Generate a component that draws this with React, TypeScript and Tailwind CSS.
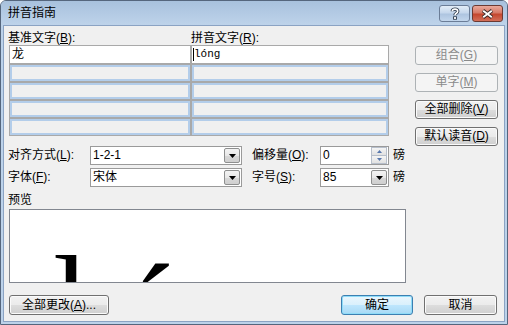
import React from "react";

const ui = "font-['Liberation_Sans','Noto_Sans_CJK_SC',sans-serif] text-[12px] leading-[13px] text-black";

function Btn({
  children,
  className = "",
  disabled,
  isDefault,
}: {
  children: React.ReactNode;
  className?: string;
  disabled?: boolean;
  isDefault?: boolean;
}) {
  const base = "flex items-center justify-center rounded-[3px] border whitespace-nowrap";
  const look = disabled
    ? "border-[#adb2b5] bg-[#f4f4f4] text-[#8a8a8a]"
    : isDefault
    ? "border-[#3c7fb1] bg-[linear-gradient(#eaf6fd_0%,#d9f0fc_50%,#bee6fd_51%,#a7d9f5_100%)] shadow-[inset_0_0_0_1px_#8fdcf8]"
    : "border-[#707070] bg-[linear-gradient(#f2f2f2_0%,#ebebeb_50%,#dddddd_51%,#cfcfcf_100%)] shadow-[inset_0_0_0_1px_#fbfbfb]";
  return <div className={`${base} ${look} ${className}`}>{children}</div>;
}

function DropArrow() {
  return (
    <div className="mr-[1px] flex h-[15px] w-[16px] items-center justify-center rounded-[2px] border border-[#8e8f8f] bg-[linear-gradient(#f3f3f3_0%,#e8e8e8_50%,#d8d8d8_51%,#cfcfcf_100%)]">
      <svg width="7" height="4" viewBox="0 0 7 4">
        <path d="M0 0h7L3.5 4z" fill="#000" />
      </svg>
    </div>
  );
}

function Combo({ value, className = "" }: { value: string; className?: string }) {
  return (
    <div className={`flex h-[19px] items-center border border-[#9a9a9a] bg-white ${className}`}>
      <span className="flex-1 pl-[2px]">{value}</span>
      <DropArrow />
    </div>
  );
}

function Spin({ value }: { value: string }) {
  return (
    <div className="flex h-[19px] w-[69px] items-center border border-[#9a9a9a] bg-white">
      <span className="flex-1 pl-[2px]">{value}</span>
      <div className="mr-[1px] flex h-[17px] w-[16px] flex-col">
        <div className="flex flex-1 items-center justify-center border border-[#b7bfcb] bg-[linear-gradient(#f5f5f5,#e1e1e1)]">
          <svg width="5" height="3" viewBox="0 0 5 3">
            <path d="M0 3h5L2.5 0z" fill="#5878ad" />
          </svg>
        </div>
        <div className="flex flex-1 items-center justify-center border border-t-0 border-[#b7bfcb] bg-[linear-gradient(#f5f5f5,#e1e1e1)]">
          <svg width="5" height="3" viewBox="0 0 5 3">
            <path d="M0 0h5L2.5 3z" fill="#5878ad" />
          </svg>
        </div>
      </div>
    </div>
  );
}

function EmptyRow() {
  return (
    <div className="flex h-[16px] gap-[2px]">
      <div className="w-[180px] border-2 border-[#b3cdea] bg-[#f0f0f0]" />
      <div className="flex-1 border-2 border-[#b3cdea] bg-[#f0f0f0]" />
    </div>
  );
}

export default function App() {
  return (
    <div className={`${ui} flex h-[325px] w-[508px] flex-col overflow-hidden rounded-t-[6px] border border-[#55667d] bg-[#bcd2ea]`}>
      {/* Title bar */}
      <div className="flex h-[24px] items-start bg-[linear-gradient(#a8c1dd,#bed3ea)] pr-[4px]">
        <span className="self-center pl-[7px]">拼音指南</span>
        <div className="ml-auto flex gap-[2px] pt-[4px]">
          <div className="flex h-[17px] w-[31px] items-center justify-center rounded-[3px] border border-[#6b7d97] bg-[linear-gradient(#e3edf7_0%,#c5d7ec_45%,#aec5e0_55%,#c2d6ec_100%)]">
            <svg width="10" height="13" viewBox="0 0 10 13">
              <path d="M2.3 4.2C2.3 1.4 7.7 1.4 7.7 4.2C7.7 6.3 5 6.2 5 8.3" fill="none" stroke="#2f3b4c" strokeWidth="3.4" />
              <rect x="3.1" y="9.3" width="3.8" height="3.4" fill="#2f3b4c" />
              <path d="M2.3 4.2C2.3 1.4 7.7 1.4 7.7 4.2C7.7 6.3 5 6.2 5 8.3" fill="none" stroke="#fff" strokeWidth="1.6" />
              <rect x="4" y="10.1" width="2" height="1.8" fill="#fff" />
            </svg>
          </div>
          <div className="flex h-[17px] w-[31px] items-center justify-center rounded-[3px] border border-[#6b3a33] bg-[linear-gradient(#eaa99b_0%,#d67a68_45%,#c4472f_55%,#d36f5a_100%)]">
            <svg width="13" height="10" viewBox="0 0 13 10">
              <path d="M2 1.5L11 8.5M11 1.5L2 8.5" stroke="#3b2a2a" strokeWidth="3.6" />
              <path d="M2.2 1.7L10.8 8.3M10.8 1.7L2.2 8.3" stroke="#fff" strokeWidth="1.8" />
            </svg>
          </div>
        </div>
      </div>

      {/* Client area */}
      <div className="mx-[2px] mb-[2px] flex flex-1 flex-col border border-[#8ba3c3] bg-[#f0f0f0]">
        {/* Text grid + side buttons */}
        <div className="flex pt-[6px]">
          <div className="ml-[4px] w-[382px]">
            <div className="flex h-[13px]">
              <span className="w-[183px]">
                基准文字(<u>B</u>):
              </span>
              <span>
                拼音文字(<u>R</u>):
              </span>
            </div>
            <div className="ml-[1px] flex w-[380px] flex-col gap-[2px] bg-[#a9a9a9] p-[1px]">
              <div className="flex h-[17px] gap-[2px]">
                <div className="flex w-[180px] items-center bg-white pl-[2px]">龙</div>
                <div className="flex flex-1 items-center bg-white pl-[1px]">
                  <span className="h-[13px] w-[1px] bg-black" />
                  <span className="font-['Liberation_Mono',monospace] text-[11px]">lóng</span>
                </div>
              </div>
              <EmptyRow />
              <EmptyRow />
              <EmptyRow />
              <EmptyRow />
            </div>
          </div>
          <div className="ml-[25px] flex flex-col gap-[8px] pt-[14px]">
            <Btn disabled className="h-[19px] w-[83px]">
              组合(<u>G</u>)
            </Btn>
            <Btn disabled className="h-[19px] w-[83px]">
              单字(<u>M</u>)
            </Btn>
            <Btn className="h-[19px] w-[83px]">
              全部删除(<u>V</u>)
            </Btn>
            <Btn className="h-[19px] w-[83px]">
              默认读音(<u>D</u>)
            </Btn>
          </div>
        </div>

        {/* Alignment / font options */}
        <div className="flex h-[19px] items-center pl-[4px]">
          <span className="w-[82px]">
            对齐方式(<u>L</u>):
          </span>
          <Combo value="1-2-1" className="w-[152px]" />
          <span className="ml-[10px] w-[68px]">
            偏移量(<u>O</u>):
          </span>
          <Spin value="0" />
          <span className="ml-[4px]">磅</span>
        </div>
        <div className="mt-[3px] flex h-[19px] items-center pl-[4px]">
          <span className="w-[82px]">
            字体(<u>F</u>):
          </span>
          <Combo value="宋体" className="w-[152px]" />
          <span className="ml-[10px] w-[68px]">
            字号(<u>S</u>):
          </span>
          <Combo value="85" className="w-[69px]" />
          <span className="ml-[4px]">磅</span>
        </div>

        {/* Preview */}
        <div className="mt-[7px] h-[13px] pl-[4px]">预览</div>
        <div className="ml-[5px] mt-[2px] h-[74px] w-[397px] overflow-hidden border border-[#828790] bg-white">
          <div className="whitespace-nowrap pl-[43px] pt-[26px] font-['Liberation_Serif',serif] text-[130px] leading-none">
            <span>l</span>
            <span className="relative top-[9px] ml-[28px]">ó</span>
            <span className="ml-[230px]">ng</span>
          </div>
        </div>

        {/* Bottom buttons */}
        <div className="mt-[12px] flex">
          <Btn className="ml-[5px] h-[20px] w-[100px]">
            全部更改(<u>A</u>)...
          </Btn>
          <div className="flex-1" />
          <Btn isDefault className="h-[20px] w-[72px]">
            确定
          </Btn>
          <Btn className="ml-[11px] mr-[7px] h-[20px] w-[73px]">取消</Btn>
        </div>
      </div>
    </div>
  );
}
